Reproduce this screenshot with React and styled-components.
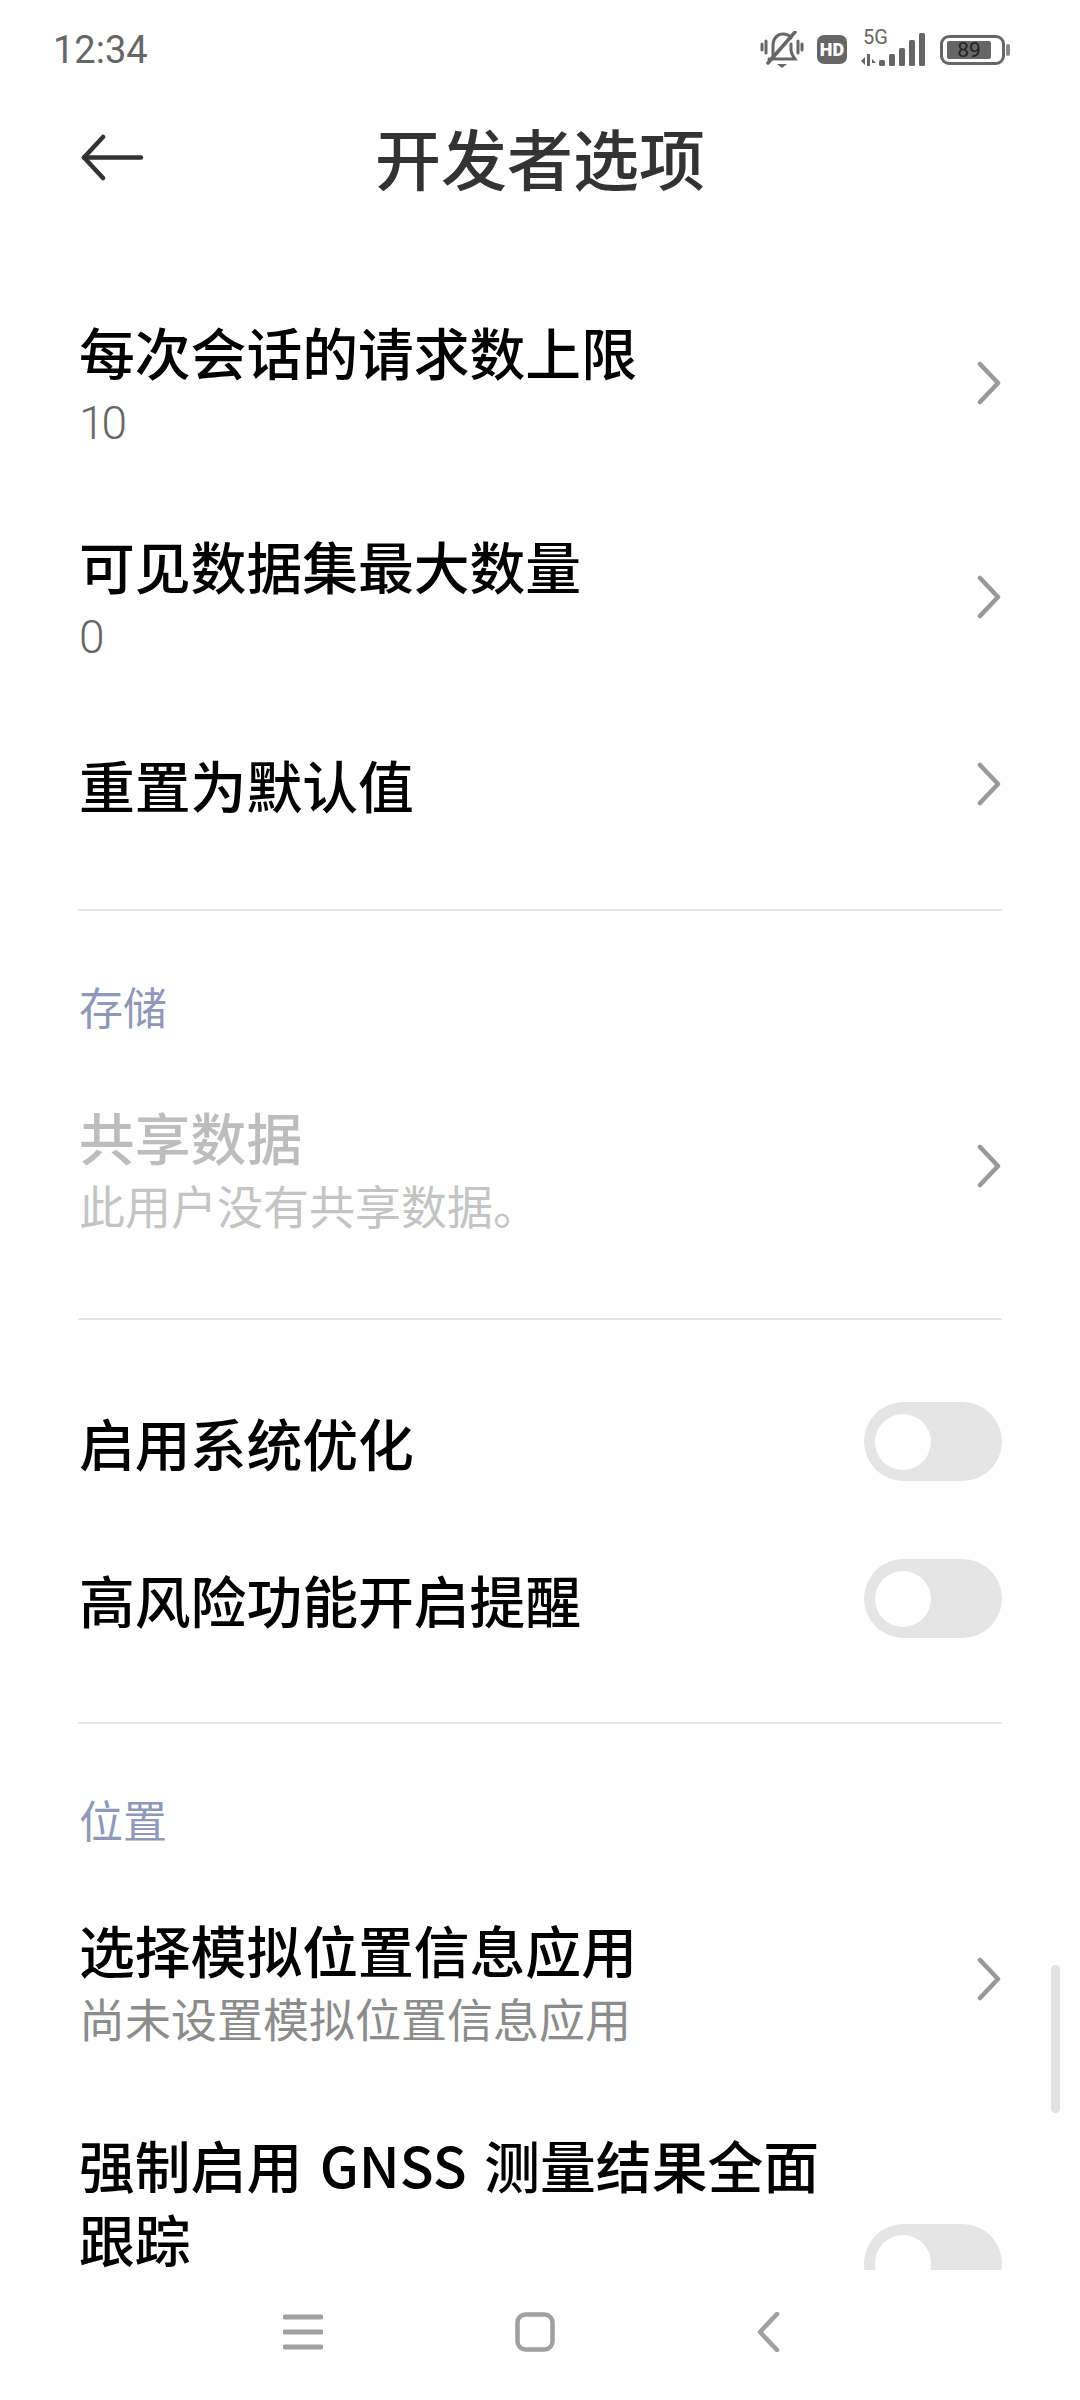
import React from "react";
import styled, { createGlobalStyle } from "styled-components";

const GlobalStyle = createGlobalStyle`
  html, body {
    margin: 0;
    padding: 0;
    background: #fff;
  }
  body {
    font-family: "Roboto", "Noto Sans CJK SC", sans-serif;
  }
`;

const Screen = styled.div`
  position: relative;
  width: 1080px;
  height: 2400px;
  background: #fff;
  overflow: hidden;
  display: flex;
  flex-direction: column;
`;

const StatusBar = styled.div`
  height: 96px;
  flex: none;
  display: flex;
  align-items: center;
  justify-content: space-between;
  padding: 3px 70px 0 53px;
  box-sizing: border-box;
`;

const Clock = styled.span`
  font-size: 38px;
  color: #666;
`;

const StatusIcons = styled.div`
  display: flex;
  align-items: center;
  gap: 13px;
`;

const HdBadge = styled.span`
  width: 30px;
  height: 29px;
  border-radius: 7px;
  background: #666;
  color: #fff;
  font-size: 18px;
  font-weight: 900;
  line-height: 29px;
  text-align: center;
`;

const Signal = styled.div`
  position: relative;
  width: 68px;
  height: 36px;
`;

const FiveG = styled.span`
  position: absolute;
  left: 3px;
  top: -6px;
  font-size: 20px;
  line-height: 22px;
  color: #666;
`;

const Battery = styled.div`
  display: flex;
  align-items: center;
  gap: 1px;
  margin-left: -1px;
`;

const BatteryShell = styled.div`
  width: 65px;
  height: 30px;
  box-sizing: border-box;
  border: 3px solid #666;
  border-radius: 9px;
  padding: 3px 4px;
`;

const BatteryFill = styled.div`
  width: 44px;
  height: 100%;
  background: #666;
  border-radius: 2px;
  color: #222;
  font-size: 21px;
  line-height: 18px;
  text-align: center;
`;

const BatteryCap = styled.div`
  width: 4px;
  height: 12px;
  background: #888;
  border-radius: 2px;
`;

const Header = styled.div`
  position: relative;
  height: 128px;
  flex: none;
  display: flex;
  align-items: center;
  justify-content: center;
  padding-bottom: 8px;
  box-sizing: border-box;
`;

const BackButton = styled.div`
  position: absolute;
  left: 78px;
  top: 38px;
  line-height: 0;
`;

const Title = styled.h1`
  margin: 0;
  font-size: 66px;
  font-weight: 500;
  color: #333;
  font-family: "Noto Sans CJK SC", sans-serif;
`;

const Scroll = styled.div`
  height: 2046px;
  flex: none;
  overflow: hidden;
  padding-top: 52px;
  box-sizing: border-box;
`;

const Row = styled.div`
  display: flex;
  align-items: center;
  justify-content: space-between;
  padding: 0 78px 0 79px;
  box-sizing: border-box;
  min-height: ${(p) => p.$height}px;
`;

const RowText = styled.div`
  display: flex;
  flex-direction: column;
  max-width: 780px;
`;

const RowTitle = styled.div`
  font-size: 55.8px;
  line-height: 74px;
  font-weight: 500;
  word-spacing: 5px;
  color: ${(p) => (p.$disabled ? "#bdbdbd" : "#000")};
  font-family: "Noto Sans CJK SC", sans-serif;
`;

const RowValue = styled.div`
  font-size: 46px;
  line-height: 58px;
  margin-top: 2px;
  color: ${(p) => (p.$disabled ? "#c4c4c4" : "#8c8c8c")};
  font-family: "Noto Sans CJK SC", sans-serif;
`;

const NumberValue = styled(RowValue)`
  margin-top: 6px;
  font-family: "Roboto", sans-serif;
  font-weight: 300;
  letter-spacing: -3px;
  color: #666;
`;

const Chevron = styled.svg`
  flex: none;
  width: 26px;
  height: 44px;
  fill: none;
  stroke: #999;
  stroke-width: 4.5;
  stroke-linecap: round;
  stroke-linejoin: round;
`;

const Divider = styled.div`
  height: 2px;
  margin: 45px 78px ${(p) => p.$bottom || 0}px;
  background: #e6e6e6;
`;

const SectionLabel = styled.div`
  padding: 0 79px;
  margin: 65px 0 23px;
  font-size: 44px;
  line-height: 60px;
  color: #8f98b8;
  font-family: "Noto Sans CJK SC", sans-serif;
`;

const Track = styled.div`
  flex: none;
  width: 138px;
  height: 79px;
  margin-top: ${(p) => p.$drop || 0}px;
  border-radius: 40px;
  background: #e5e5e5;
  display: flex;
  align-items: center;
  padding-left: 11px;
  box-sizing: border-box;
`;

const Knob = styled.div`
  width: 56px;
  height: 56px;
  border-radius: 50%;
  background: #fff;
`;

const ScrollThumb = styled.div`
  position: absolute;
  left: 1051px;
  top: 1965px;
  width: 9px;
  height: 148px;
  border-radius: 5px;
  background: #e2e2e2;
`;

const NavBar = styled.div`
  flex: 1;
  display: flex;
  align-items: flex-start;
  justify-content: center;
  gap: 192px;
  padding: 42px 10px 0 0;
`;

const NavIcon = styled.svg`
  width: 40px;
  height: 40px;
  fill: none;
  stroke: #a0a0a0;
  stroke-width: 4.5;
  stroke-linecap: round;
  stroke-linejoin: round;
`;

const ChevronIcon = () => (
  <Chevron viewBox="0 0 26 44">
    <path d="M4 3 L22 22 L4 41" />
  </Chevron>
);

const Switch = ({ drop }) => (
  <Track $drop={drop}>
    <Knob />
  </Track>
);

const MuteBell = () => (
  <svg width="44" height="38" viewBox="0 0 44 38" fill="none" stroke="#666" strokeWidth="3" strokeLinecap="round">
    <path d="M13 25 V14 C13 7 18 3 23 3 C26 3 29 4 31 7" />
    <path d="M31 13 V19 C31 23 33 25 35 28 H9" />
    <path d="M35 1 L8 32" strokeWidth="3.5" />
    <path d="M17 33 H27 L22 37 Z" fill="#666" stroke="none" />
    <path d="M2 13 V19 M6 10 V22 M38 10 V22 M42 13 V19" strokeWidth="3" />
  </svg>
);

const SignalBars = () => (
  <svg width="68" height="36" viewBox="0 0 68 36" fill="#666">
    <path d="M1 29 L5 25 V33 Z M7 22 H10 V34 H7 Z M12 27 L16 31 H12 Z" />
    <rect x="19" y="28" width="6" height="6" rx="1.5" />
    <rect x="29" y="22" width="6" height="12" rx="1.5" />
    <rect x="39" y="16" width="6" height="18" rx="1.5" />
    <rect x="49" y="8" width="6" height="26" rx="1.5" />
    <rect x="59" y="1" width="6" height="33" rx="1.5" />
  </svg>
);

export default function App() {
  return (
    <>
      <GlobalStyle />
      <Screen>
        <StatusBar>
          <Clock>12:34</Clock>
          <StatusIcons>
            <MuteBell />
            <HdBadge>HD</HdBadge>
            <Signal>
              <FiveG>5G</FiveG>
              <SignalBars />
            </Signal>
            <Battery>
              <BatteryShell>
                <BatteryFill>89</BatteryFill>
              </BatteryShell>
              <BatteryCap />
            </Battery>
          </StatusIcons>
        </StatusBar>
        <Header>
          <BackButton>
            <svg width="66" height="48" viewBox="0 0 66 48" fill="none" stroke="#333" strokeWidth="4.5" strokeLinecap="round" strokeLinejoin="round">
              <path d="M25 3 L6 23.5 L25 44" />
              <path d="M6 23.5 H63" />
            </svg>
          </BackButton>
          <Title>开发者选项</Title>
        </Header>
        <Scroll>
          <Row $height={214}>
            <RowText>
              <RowTitle>每次会话的请求数上限</RowTitle>
              <NumberValue>10</NumberValue>
            </RowText>
            <ChevronIcon />
          </Row>
          <Row $height={214}>
            <RowText>
              <RowTitle>可见数据集最大数量</RowTitle>
              <NumberValue>0</NumberValue>
            </RowText>
            <ChevronIcon />
          </Row>
          <Row $height={160}>
            <RowText>
              <RowTitle>重置为默认值</RowTitle>
            </RowText>
            <ChevronIcon />
          </Row>
          <Divider />
          <SectionLabel>存储</SectionLabel>
          <Row $height={214}>
            <RowText>
              <RowTitle $disabled>共享数据</RowTitle>
              <RowValue $disabled>此用户没有共享数据。</RowValue>
            </RowText>
            <ChevronIcon />
          </Row>
          <Divider $bottom={43} />
          <Row $height={157}>
            <RowText>
              <RowTitle>启用系统优化</RowTitle>
            </RowText>
            <Switch />
          </Row>
          <Row $height={157}>
            <RowText>
              <RowTitle>高风险功能开启提醒</RowTitle>
            </RowText>
            <Switch />
          </Row>
          <Divider />
          <SectionLabel>位置</SectionLabel>
          <Row $height={214}>
            <RowText>
              <RowTitle>选择模拟位置信息应用</RowTitle>
              <RowValue>尚未设置模拟位置信息应用</RowValue>
            </RowText>
            <ChevronIcon />
          </Row>
          <Row $height={230}>
            <RowText>
              <RowTitle>强制启用 GNSS 测量结果全面跟踪</RowTitle>
            </RowText>
            <Switch drop={124} />
          </Row>
        </Scroll>
        <ScrollThumb />
        <NavBar>
          <NavIcon viewBox="0 0 40 40">
            <path d="M2 5 H38 M2 20 H38 M2 35 H38" strokeWidth="5" />
          </NavIcon>
          <NavIcon viewBox="0 0 40 40">
            <rect x="2.5" y="2.5" width="35" height="35" rx="8" />
          </NavIcon>
          <NavIcon viewBox="0 0 40 40">
            <path d="M30 2 L13 20 L30 38" />
          </NavIcon>
        </NavBar>
      </Screen>
    </>
  );
}
